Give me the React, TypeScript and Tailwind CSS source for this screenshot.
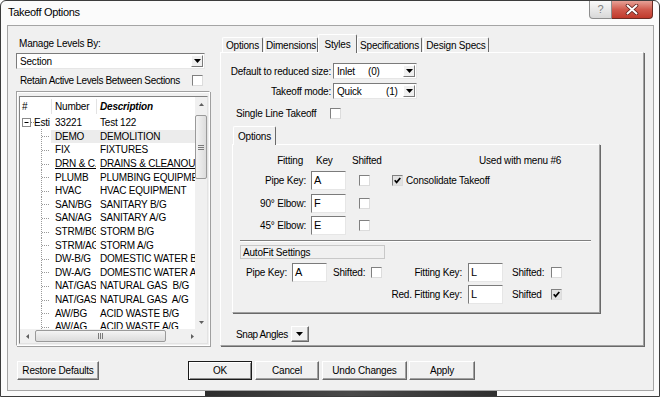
import React from "react";

type Kid = { children?: React.ReactNode; className?: string };

const Tri = ({ dir = "down", c = "#000" }: { dir?: "down" | "up" | "left" | "right"; c?: string }) => {
  if (dir === "down") return <svg width="7" height="4" viewBox="0 0 7 4"><path d="M0 0h7L3.5 4z" fill={c} /></svg>;
  if (dir === "up") return <svg width="5" height="3" viewBox="0 0 5 3"><path d="M0 3h5L2.5 0z" fill={c} /></svg>;
  if (dir === "left") return <svg width="3" height="5" viewBox="0 0 3 5"><path d="M3 0v5L0 2.5z" fill={c} /></svg>;
  return <svg width="3" height="5" viewBox="0 0 3 5"><path d="M0 0v5L3 2.5z" fill={c} /></svg>;
};

const SmallDown = () => <svg width="5" height="3" viewBox="0 0 5 3"><path d="M0 0h5L2.5 3z" fill="#606060" /></svg>;

function Check({ checked = false }: { checked?: boolean }) {
  return (
    <span
      className={
        checked
          ? "inline-flex h-[11px] w-[11px] shrink-0 items-center justify-center border border-t-[#808080] border-l-[#808080] border-b-[#dcdcdc] border-r-[#dcdcdc] bg-[#e2e2e2]"
          : "inline-flex h-[11px] w-[11px] shrink-0 items-center justify-center border border-t-[#808080] border-l-[#808080] border-b-[#dcdcdc] border-r-[#dcdcdc] bg-white"
      }
    >
      {checked && (
        <svg width="7" height="7" viewBox="0 0 7 7">
          <path d="M0.7 3.3 L2.6 5.4 L6.3 1" stroke="#000" strokeWidth="1.7" fill="none" />
        </svg>
      )}
    </span>
  );
}

function Field({ v }: { v: string }) {
  return (
    <div className="h-[19px] w-[35px] shrink-0 border border-t-[#7b7b7b] border-l-[#7b7b7b] border-b-[#e6e6e6] border-r-[#e6e6e6] bg-white pl-[2px] pt-[1px] text-[11px] leading-[14px]">
      {v}
    </div>
  );
}

function Combo({ children, className = "" }: Kid) {
  return (
    <div className={`flex h-[16px] shrink-0 items-stretch border border-t-[#7b7b7b] border-l-[#7b7b7b] border-b-[#e6e6e6] border-r-[#e6e6e6] bg-white ${className}`}>
      <div className="flex flex-1 items-center overflow-hidden whitespace-nowrap pl-[3px]">{children}</div>
      <div className="m-px flex w-[12px] items-center justify-center border border-t-white border-l-white border-b-[#7b7b7b] border-r-[#7b7b7b] bg-[#f0f0f0]">
        <Tri />
      </div>
    </div>
  );
}

function Btn({ children, className = "" }: Kid) {
  return (
    <div className={`flex h-[19px] shrink-0 items-center justify-center whitespace-nowrap border border-t-white border-l-white border-b-[#696969] border-r-[#696969] bg-[#f0f0f0] shadow-[inset_-1px_-1px_0_#a0a0a0] ${className}`}>
      {children}
    </div>
  );
}

function Tab({ label, active = false, className = "" }: { label: string; active?: boolean; className?: string }) {
  return active ? (
    <div className={`relative z-10 -mb-px flex h-[19px] items-center justify-center whitespace-nowrap rounded-t-[2px] border-l border-t border-r border-l-white border-t-white border-r-[#696969] bg-[#f0f0f0] ${className}`}>
      {label}
    </div>
  ) : (
    <div className={`flex h-[15px] items-center justify-center whitespace-nowrap rounded-t-[2px] border-l border-t border-r border-l-white border-t-white border-r-[#696969] ${className}`}>
      {label}
    </div>
  );
}

const rows: [string, string][] = [
  ["DEMO", "DEMOLITION"],
  ["FIX", "FIXTURES"],
  ["DRN & C.O", "DRAINS & CLEANOUT"],
  ["PLUMB", "PLUMBING EQUIPMENT"],
  ["HVAC", "HVAC EQUIPMENT"],
  ["SAN/BG", "SANITARY B/G"],
  ["SAN/AG", "SANITARY A/G"],
  ["STRM/BG", "STORM B/G"],
  ["STRM/AG", "STORM A/G"],
  ["DW-B/G", "DOMESTIC WATER B/G"],
  ["DW-A/G", "DOMESTIC WATER A/G"],
  ["NAT/GAS", "NATURAL GAS  B/G"],
  ["NAT/GAS", "NATURAL GAS  A/G"],
  ["AW/BG", "ACID WASTE B/G"],
  ["AW/AG", "ACID WASTE A/G"],
];

function TreeStub({ root = false }: { root?: boolean }) {
  if (root)
    return (
      <svg width="14" height="14" viewBox="0 0 14 14" className="shrink-0">
        <rect x="2.5" y="2.5" width="8" height="8" fill="#fff" stroke="#8a8a8a" />
        <path d="M4.5 6.5h4" stroke="#000" />
        <path d="M11 6.5h3" stroke="#8a8a8a" strokeDasharray="1 1" />
      </svg>
    );
  return (
    <svg width="31" height="14" viewBox="0 0 31 14" className="shrink-0">
      <path d="M21.5 0v14" stroke="#9a9a9a" strokeDasharray="1 1" />
      <path d="M22 7.5h7" stroke="#9a9a9a" strokeDasharray="1 1" />
    </svg>
  );
}

function ListView() {
  return (
    <div className="flex h-full flex-col border border-t-[#828282] border-l-[#828282] border-b-[#e3e3e3] border-r-[#e3e3e3] bg-white">
      <div className="flex min-h-0 flex-1">
        <div className="min-w-0 flex-1 overflow-hidden">
          <div className="flex h-[19px] items-center whitespace-nowrap">
            <div className="w-[31px] shrink-0 pl-[2px]">#</div>
            <div className="h-[15px] w-px bg-[#e3e3e3]" />
            <div className="w-[44px] shrink-0 pl-[3px]">Number</div>
            <div className="h-[15px] w-px bg-[#e3e3e3]" />
            <div className="pl-[3px] font-bold italic">Description</div>
          </div>
          <div className="flex h-[13.6px] items-center whitespace-nowrap">
            <div className="flex w-[31px] shrink-0 items-center overflow-hidden">
              <TreeStub root />
              <span>Esti</span>
            </div>
            <div className="w-[45px] shrink-0 overflow-hidden pl-[4px]">33221</div>
            <div className="pl-[4px]">Test 122</div>
          </div>
          {rows.map(([n, d], i) => (
            <div key={i} className="flex h-[13.6px] items-center whitespace-pre">
              <TreeStub />
              <div
                className={
                  i === 0
                    ? "flex h-full flex-1 items-center bg-[#ececec]"
                    : i === 2
                    ? "flex h-full flex-1 items-center underline"
                    : "flex h-full flex-1 items-center"
                }
              >
                <div className="w-[45px] shrink-0 overflow-hidden pl-[4px]">{n}</div>
                <div className="min-w-0 flex-1 overflow-hidden pl-[4px]">{d}</div>
              </div>
            </div>
          ))}
        </div>
        <div className="flex w-[12px] shrink-0 flex-col bg-[#f0f0f0]">
          <div className="flex h-[15px] items-center justify-center">
            <Tri dir="up" c="#606060" />
          </div>
          <div className="mt-[3px] flex h-[64px] items-center justify-center rounded-[2px] border border-[#9a9a9a] bg-gradient-to-r from-[#f4f4f4] to-[#dcdcdc]">
            <svg width="6" height="5" viewBox="0 0 6 5">
              <path d="M0 0.5h6M0 2.5h6M0 4.5h6" stroke="#7a7a7a" />
            </svg>
          </div>
          <div className="flex-1" />
          <div className="flex h-[14px] items-center justify-center">
            <SmallDown />
          </div>
        </div>
      </div>
      <div className="flex h-[14px] shrink-0 items-stretch bg-[#f0f0f0]">
        <div className="flex w-[14px] items-center justify-center">
          <Tri dir="left" c="#606060" />
        </div>
        <div className="my-px ml-px flex w-[131px] items-center justify-center rounded-[2px] border border-[#9a9a9a] bg-gradient-to-b from-[#f4f4f4] to-[#dcdcdc]">
          <svg width="5" height="6" viewBox="0 0 5 6">
            <path d="M0.5 0v6M2.5 0v6M4.5 0v6" stroke="#7a7a7a" />
          </svg>
        </div>
        <div className="flex-1" />
        <div className="flex w-[20px] items-center justify-start pl-[4px]">
          <Tri dir="right" c="#606060" />
        </div>
      </div>
    </div>
  );
}

export default function App() {
  return (
    <div className="h-[397px] w-[660px] overflow-hidden bg-white font-['Liberation_Sans',Arial,sans-serif] text-[10px] leading-[13px] tracking-[-0.2px] text-black">
      <div className="flex h-full w-full flex-col rounded-t-[6px] border border-[#3c3c3c] bg-[#fbfbfb]">
        {/* title bar */}
        <div className="flex h-[24px] shrink-0 items-start">
          <div className="ml-[7px] mt-[5px] text-[11px] tracking-[-0.3px]">Takeoff Options</div>
          <div className="ml-auto mr-[6px] flex">
            <div className="flex h-[18px] w-[23px] items-center justify-center rounded-bl-[4px] border border-t-0 border-[#8d8d8d] bg-gradient-to-b from-[#fafafa] to-[#d8d8d8] text-[11px] text-[#808080]">
              ?
            </div>
            <div className="flex h-[18px] w-[41px] items-center justify-center rounded-br-[4px] border border-l-0 border-t-0 border-[#6b2b23] bg-gradient-to-b from-[#e6a197] via-[#d05a4d] to-[#c0392b]">
              <svg width="14" height="11" viewBox="0 0 14 11">
                <path d="M2.5 1.5l9 8M11.5 1.5l-9 8" stroke="#5a1f1a" strokeWidth="3.6" strokeLinecap="round" />
                <path d="M2.5 1.5l9 8M11.5 1.5l-9 8" stroke="#fff" strokeWidth="2" strokeLinecap="round" />
              </svg>
            </div>
          </div>
        </div>

        {/* client */}
        <div className="ml-[6px] flex h-[366px] w-[647px] shrink-0 flex-col border border-[#a5a5a5] bg-[#f0f0f0]">
          <div className="flex gap-[10px] pl-[8px] pr-[9px] pt-[8px]">
            {/* left */}
            <div className="flex w-[194px] shrink-0 flex-col">
              <div className="ml-[3px] mt-[3px] h-[13px]">Manage Levels By:</div>
              <Combo className="mt-[3px] w-[189px]">Section</Combo>
              <div className="mt-[5px] flex h-[13px] items-center">
                <span className="ml-[4px] w-[172px] shrink-0 whitespace-nowrap tracking-[-0.35px]">Retain Active Levels Between Sections</span>
                <Check />
              </div>
              <div className="mt-[4px] h-[255px] border border-t-[#a0a0a0] border-l-[#a0a0a0] border-b-white border-r-white pb-[1px] pl-[2px] pr-[1px] pt-[4px] shadow-[inset_1px_1px_0_#fff,1px_1px_0_#a0a0a0]">
                <ListView />
              </div>
            </div>

            {/* right */}
            <div className="flex w-[424px] shrink-0 flex-col">
              <div className="flex h-[18px] items-end pl-[2px]">
                <Tab label="Options" className="w-[41px]" />
                <Tab label="Dimensions" className="ml-[1px] w-[54px]" />
                <Tab label="Styles" active className="w-[39px]" />
                <Tab label="Specifications" className="w-[65px]" />
                <Tab label="Design Specs" className="ml-px w-[66px]" />
              </div>
              <div className="flex h-[294px] flex-col border border-t-white border-l-white border-b-[#a0a0a0] border-r-[#a0a0a0] shadow-[1px_1px_0_#696969]">
                <div className="mt-[10px] flex items-center">
                  <div className="w-[110px] shrink-0 whitespace-nowrap text-right">Default to reduced size:</div>
                  <Combo className="ml-[2px] w-[84px]">
                    <span className="w-[31px]">Inlet</span>
                    <span>(0)</span>
                  </Combo>
                </div>
                <div className="mt-[4px] flex items-center">
                  <div className="w-[110px] shrink-0 whitespace-nowrap text-right">Takeoff mode:</div>
                  <Combo className="ml-[2px] w-[84px]">
                    <span className="w-[49px]">Quick</span>
                    <span>(1)</span>
                  </Combo>
                </div>
                <div className="mt-[8px] flex h-[13px] items-center pl-[15px]">
                  <span className="w-[94px] shrink-0 whitespace-nowrap">Single Line Takeoff</span>
                  <Check />
                </div>

                <div className="ml-[11px] mt-[8px] flex h-[16px] items-end">
                  <Tab label="Options" active className="ml-px h-[17px] w-[43px]" />
                </div>
                <div className="ml-[11px] flex h-[169px] w-[368px] flex-col border border-t-white border-l-white border-b-[#a0a0a0] border-r-[#a0a0a0] shadow-[1px_1px_0_#696969]">
                  <div className="mt-[9px] flex h-[13px] items-center whitespace-nowrap">
                    <div className="w-[73px] shrink-0 pr-[3px] text-right">Fitting</div>
                    <div className="ml-[10px] w-[36px] shrink-0">Key</div>
                    <div className="w-[127px] shrink-0">Shifted</div>
                    <div>Used with menu #6</div>
                  </div>
                  {[
                    ["Pipe Key:", "A"],
                    ["90° Elbow:", "F"],
                    ["45° Elbow:", "E"],
                  ].map(([l, v], i) => (
                    <div key={l} className={i === 2 ? "mt-[3px] flex h-[19px] items-center" : "mt-[4px] flex h-[19px] items-center"}>
                      <div className="w-[73px] shrink-0 whitespace-nowrap text-right">{l}</div>
                      <div className="ml-[5px]">
                        <Field v={v} />
                      </div>
                      <div className="ml-[13px] flex">
                        <Check />
                      </div>
                      {i === 0 && (
                        <div className="ml-[22px] flex items-center whitespace-nowrap">
                          <Check checked />
                          <span className="ml-[3px]">Consolidate Takeoff</span>
                        </div>
                      )}
                    </div>
                  ))}
                  <div className="ml-[7px] mt-[5px] h-[2px] w-[351px] border-t border-b border-t-[#808080] border-b-white" />
                  <div className="ml-[7px] mt-[3px] flex h-[14px] w-[145px] items-center border border-[#c8c8c8] pl-[2px]">AutoFit Settings</div>
                  <div className="mt-[4px] flex h-[19px] items-center whitespace-nowrap">
                    <div className="w-[54px] shrink-0 text-right">Pipe Key:</div>
                    <div className="ml-[5px]">
                      <Field v="A" />
                    </div>
                    <div className="ml-[6px] w-[38px] shrink-0">Shifted:</div>
                    <Check />
                    <div className="w-[80px] shrink-0 text-right">Fitting Key:</div>
                    <div className="ml-[6px]">
                      <Field v="L" />
                    </div>
                    <div className="ml-[9px] w-[39px] shrink-0">Shifted:</div>
                    <Check />
                  </div>
                  <div className="mt-[3px] flex h-[19px] items-center whitespace-nowrap">
                    <div className="w-[149px] shrink-0" />
                    <div className="w-[80px] shrink-0 text-right">Red. Fitting Key:</div>
                    <div className="ml-[6px]">
                      <Field v="L" />
                    </div>
                    <div className="ml-[9px] w-[39px] shrink-0">Shifted</div>
                    <Check checked />
                  </div>
                </div>

                <div className="mt-[13px] flex h-[16px] items-center pl-[15px]">
                  <span className="shrink-0 whitespace-nowrap tracking-[-0.4px]">Snap Angles</span>
                  <div className="ml-[3px] flex h-[16px] w-[18px] items-center justify-center border border-t-white border-l-white border-b-[#696969] border-r-[#696969] bg-[#f0f0f0] shadow-[inset_-1px_-1px_0_#a0a0a0]">
                    <Tri />
                  </div>
                </div>
              </div>
            </div>
          </div>

          {/* buttons */}
          <div className="mt-[15px] flex items-center pl-[9px]">
            <Btn className="w-[82px]">Restore Defaults</Btn>
            <div className="ml-[89px] flex h-[19px] w-[64px] items-center justify-center border border-[#1a1a1a] bg-[#f0f0f0] shadow-[inset_1px_1px_0_#fff,inset_-1px_-1px_0_#8a8a8a]">OK</div>
            <Btn className="ml-[3px] w-[64px]">Cancel</Btn>
            <Btn className="ml-[3px] w-[85px]">Undo Changes</Btn>
            <Btn className="ml-[2px] w-[66px]">Apply</Btn>
          </div>
        </div>

        {/* bottom frame with the dark strip behind */}
        <div className="flex flex-1 items-stretch">
          <div className="ml-[204px] w-[292px] bg-gradient-to-r from-[#2e2e2e] via-[#4a4a4a] to-[#303030]" />
        </div>
      </div>
    </div>
  );
}
